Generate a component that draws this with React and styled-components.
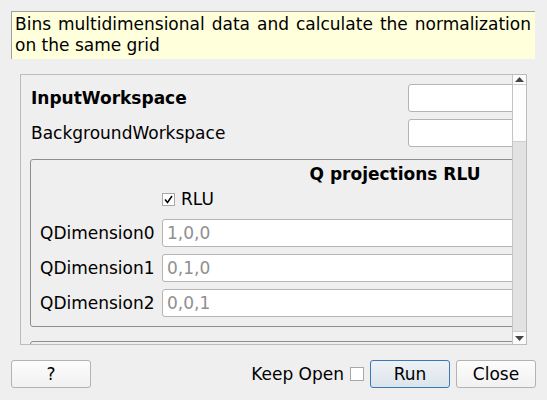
import React from 'react';
import styled, { createGlobalStyle } from 'styled-components';

const Global = createGlobalStyle`
  html, body { margin: 0; padding: 0; background: #efefef; }
  body { font-family: "DejaVu Sans", sans-serif; font-size: 17px; color: #000; }
  * { box-sizing: border-box; }
`;

const Dialog = styled.div`
  width: 547px;
  height: 400px;
  padding: 11px 11px 0 11px;
  display: flex;
  flex-direction: column;
`;

const Description = styled.div`
  width: 524px;
  height: 48px;
  background: #ffffdc;
  border-top: 1px solid #a0a0a0;
  border-left: 1px solid #a0a0a0;
  padding: 2px 4px 0 3px;
  line-height: 21px;
  text-align: justify;
  overflow: hidden;
`;

const ScrollArea = styled.div`
  margin: 15px 0 0 9px;
  width: 507px;
  height: 271px;
  border: 1px solid #bcbcbc;
  display: flex;
`;

const Viewport = styled.div`
  flex: 1;
  overflow: hidden;
`;

const Content = styled.div`
  width: 760px;
  padding: 9px 0 0 9px;
`;

const TopGrid = styled.div`
  display: grid;
  grid-template-columns: 378px 1fr;
  row-gap: 7px;
  align-items: center;
`;

const Label = styled.div`
  padding-left: ${p => p.inset || 0}px;
  font-weight: ${p => (p.bold ? 'bold' : 'normal')};
  white-space: nowrap;
`;

const Field = styled.input`
  height: 28px;
  width: 100%;
  border: 1px solid #b4b4b4;
  border-radius: 3px;
  background: #fff;
  padding: 0 4px;
  font: inherit;
  color: #000;
  &::placeholder { color: #8f8f8f; }
`;

const Group = styled.div`
  margin-top: 12px;
  width: 730px;
  border: 1px solid #8e8e8e;
  border-radius: 3px;
  padding: 4px 0 9px 0;
`;

const GroupTitle = styled.div`
  text-align: center;
  font-weight: bold;
  line-height: 20px;
`;

const GroupGrid = styled.div`
  display: grid;
  grid-template-columns: 122px 1fr;
  row-gap: 7px;
  align-items: center;
  padding-left: 9px;
`;

const CheckRow = styled.label`
  grid-column: 2;
  display: flex;
  align-items: center;
  gap: 6px;
  height: 20px;
  margin: 5px 0 3px 0;
`;

const Box = styled.span`
  width: ${p => p.size}px;
  height: ${p => p.size}px;
  border: 1px solid #a8a8a8;
  background: #fff;
  display: inline-flex;
  align-items: center;
  justify-content: center;
  flex: none;
`;

const NextGroup = styled.div`
  margin-top: 14px;
  width: 730px;
  height: 20px;
  border: 1px solid #8e8e8e;
  border-radius: 3px;
`;

const ScrollBar = styled.div`
  width: 14px;
  border-left: 1px solid #c4c4c4;
  display: flex;
  flex-direction: column;
  background: #e2e2e2;
`;

const ArrowBtn = styled.div`
  height: ${p => p.h}px;
  background: #fcfcfc;
  border-${p => (p.top ? 'bottom' : 'top')}: 1px solid #cfcfcf;
  display: flex;
  align-items: center;
  justify-content: center;
`;

const Handle = styled.div`
  height: 57px;
  background: #fdfdfd;
  border-bottom: 1px solid #cfcfcf;
`;

const Track = styled.div`
  flex: 1;
`;

const Footer = styled.div`
  margin-top: 15px;
  display: flex;
  align-items: center;
  height: 28px;
`;

const Button = styled.button`
  width: ${p => p.w || 80}px;
  height: 28px;
  font: inherit;
  color: #000;
  border-radius: 3px;
  border: 1px solid ${p => (p.primary ? '#3a78b8' : '#b3b3b3')};
  background: ${p => (p.primary
    ? 'linear-gradient(#eef2f6, #dce4ec)'
    : 'linear-gradient(#fcfcfc, #f1f1f1)')};
  padding: 0;
  margin-left: ${p => p.ml || 0}px;
`;

const Spacer = styled.div`
  flex: 1;
`;

const KeepOpen = styled.label`
  display: flex;
  align-items: center;
  gap: 6px;
`;

const Tri = ({ up }) => (
  <svg width="9" height="5" viewBox="0 0 9 5">
    <path d={up ? 'M0 5 L4.5 0 L9 5 Z' : 'M0 0 L4.5 5 L9 0 Z'} fill="#444" />
  </svg>
);

const dims = [
  ['QDimension0', '1,0,0'],
  ['QDimension1', '0,1,0'],
  ['QDimension2', '0,0,1'],
];

export default function App() {
  return (
    <>
      <Global />
      <Dialog>
        <Description>
          Bins multidimensional data and calculate the normalization on the same grid
        </Description>
        <ScrollArea>
          <Viewport>
            <Content>
              <TopGrid>
                <Label bold inset={1}>InputWorkspace</Label>
                <Field />
                <Label inset={1}>BackgroundWorkspace</Label>
                <Field />
              </TopGrid>
              <Group>
                <GroupTitle>Q projections RLU</GroupTitle>
                <GroupGrid>
                  <CheckRow>
                    <Box size={13}>
                      <svg width="9" height="9" viewBox="0 0 9 9">
                        <path d="M1 4.5 L3.5 7.5 L8 1" stroke="#000" strokeWidth="1.5" fill="none" />
                      </svg>
                    </Box>
                    RLU
                  </CheckRow>
                  {dims.map(([name, val]) => (
                    <React.Fragment key={name}>
                      <Label>{name}</Label>
                      <Field placeholder={val} />
                    </React.Fragment>
                  ))}
                </GroupGrid>
              </Group>
              <NextGroup />
            </Content>
          </Viewport>
          <ScrollBar>
            <ArrowBtn top h={10}><Tri up /></ArrowBtn>
            <Handle />
            <Track />
            <ArrowBtn h={13}><Tri /></ArrowBtn>
          </ScrollBar>
        </ScrollArea>
        <Footer>
          <Button w={80}>?</Button>
          <Spacer />
          <KeepOpen>
            Keep Open
            <Box size={14} />
          </KeepOpen>
          <Button primary w={80} ml={6}>Run</Button>
          <Button w={80} ml={6}>Close</Button>
        </Footer>
      </Dialog>
    </>
  );
}
